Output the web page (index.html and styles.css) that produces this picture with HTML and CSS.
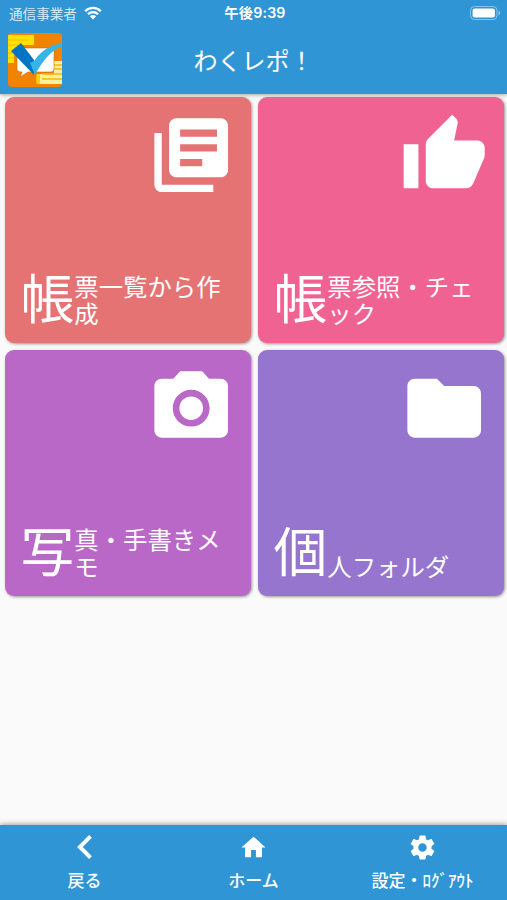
FILE: index.html
```
<!DOCTYPE html>
<html lang="ja">
<head>
    <meta charset="UTF-8">
    <meta name="viewport" content="width=device-width, initial-scale=1.0">
    <title>わくレポ！</title>
    <link rel="stylesheet" href="styles.css">
</head>
<body>

    <!-- Status bar and title -->
    <header class="header">
        <div class="status-bar">
            <div class="carrier">
                <span>通信事業者</span>
                <svg class="wifi" viewBox="0 0 18 14">
                    <path d="M1.2 5.2a11 11 0 0 1 15.6 0M4 8.2a7 7 0 0 1 10 0" fill="none" stroke="#fff" stroke-width="2.3"/>
                    <path d="M9 13.4L5.9 10.3a4.4 4.4 0 0 1 6.2 0z" fill="#fff"/>
                </svg>
            </div>
            <div class="clock">午後9:39</div>
            <svg class="battery" viewBox="0 0 31 14">
                <rect x=".5" y=".5" width="26.5" height="13" rx="4" fill="none" stroke="#8cc3e8"/>
                <rect x="2.6" y="2.6" width="22.3" height="8.8" rx="2" fill="#fff"/>
                <path d="M28.5 4.7v4.6c1-.3 1.7-1.2 1.7-2.3s-.7-2-1.7-2.3z" fill="#8cc3e8"/>
            </svg>
        </div>
        <div class="title-bar">
            <svg class="logo" viewBox="0 0 54 54">
                <defs><clipPath id="logo-clip"><rect width="54" height="54" rx="4"/></clipPath></defs>
                <g clip-path="url(#logo-clip)">
                    <rect width="54" height="54" fill="#f08300"/>
                    <path d="M0 2h26v10H14v5H6v13H0z" fill="#ffe100"/>
                    <path d="M0 7h20M0 12h10M0 20h6M0 25h6" stroke="#f5b000" stroke-width=".8"/>
                    <path d="M46 28h8v23H32V41h14z" fill="#fff0a0"/>
                    <path d="M32 41h-3q-2 5 0 10h3z" fill="#ffd200"/>
                    <path d="M46 32h8M46 36h8M34 41h20M34 46h20" stroke="#f5b800" stroke-width="1.3"/>
                    <path d="M12 15h31q3 0 3 3v18q0 3-3 3H20l-8 5 2-5q-5 0-5-3V18q0-3 3-3z" fill="#fff" stroke="#c96d00" stroke-width=".6"/>
                    <path d="M3 18l10-8 13 17v15z" fill="#0075c2"/>
                    <path d="M22 30l4-2q10-15 28-18v3Q39 19 27 42z" fill="#36b4e5"/>
                </g>
            </svg>
            <h1>わくレポ！</h1>
        </div>
    </header>

    <!-- Menu tiles -->
    <main class="menu">
        <a class="card red">
            <svg class="card-icon" viewBox="0 0 24 24">
                <path d="M4 6H2v14c0 1.100.9 2 2 2h14v-2H4V6zm16-4H8c-1.100 0-2 .9-2 2v12c0 1.100.9 2 2 2h12c1.100 0 2-.9 2-2V4c0-1.100-.9-2-2-2zm-1 9H9V9h10v2zm-4 4H9v-2h6v2zm4-8H9V5h10v2z"/>
            </svg>
            <div class="card-text"><span class="first">帳</span><span class="rest">票一覧から作<br>成</span></div>
        </a>
        <a class="card pink">
            <svg class="card-icon" viewBox="0 0 24 24">
                <path d="M1 21h4V9H1v12zm22-11c0-1.100-.9-2-2-2h-6.310l.95-4.570.03-.32c0-.41-.17-.79-.44-1.060L14.170 1 7.590 7.590C7.220 7.950 7 8.450 7 9v10c0 1.100.9 2 2 2h9c.83 0 1.540-.5 1.840-1.220l3.020-7.050c.09-.23.14-.47.14-.73v-2z"/>
            </svg>
            <div class="card-text"><span class="first">帳</span><span class="rest">票参照・チェ<br>ック</span></div>
        </a>
        <a class="card purple">
            <svg class="card-icon" viewBox="0 0 24 24">
                <circle cx="12" cy="12" r="3.2"/>
                <path d="M9 2L7.170 4H4c-1.100 0-2 .9-2 2v12c0 1.100.9 2 2 2h16c1.100 0 2-.9 2-2V6c0-1.100-.9-2-2-2h-3.170L15 2H9zm3 15c-2.760 0-5-2.240-5-5s2.240-5 5-5 5 2.240 5 5-2.240 5-5 5z"/>
            </svg>
            <div class="card-text"><span class="first">写</span><span class="rest">真・手書きメ<br>モ</span></div>
        </a>
        <a class="card violet">
            <svg class="card-icon" viewBox="0 0 24 24">
                <path d="M10 4H4c-1.100 0-2 .9-2 2v12c0 1.100.9 2 2 2h16c1.100 0 2-.9 2-2V8c0-1.100-.9-2-2-2h-8l-2-2z"/>
            </svg>
            <div class="card-text"><span class="first">個</span><span class="rest">人フォルダ</span></div>
        </a>
    </main>

    <!-- Bottom navigation -->
    <nav class="nav-bar">
        <a class="nav-item">
            <svg class="back" viewBox="8 6 7.41 12"><path d="M15.410 7.410L14 6l-6 6 6 6 1.410-1.410L10.830 12z"/></svg>
            <span>戻る</span>
        </a>
        <a class="nav-item">
            <svg viewBox="0 0 24 24"><path d="M10 20v-6h4v6h5v-8h3L12 3 2 12h3v8z"/></svg>
            <span>ホーム</span>
        </a>
        <a class="nav-item">
            <svg viewBox="0 0 24 24"><path d="M19.430 12.980c.04-.32.07-.64.07-.98s-.03-.66-.07-.98l2.110-1.650c.19-.15.24-.42.12-.64l-2-3.460c-.12-.22-.39-.3-.61-.22l-2.490 1c-.52-.4-1.080-.73-1.690-.98l-.38-2.650C14.460 2.180 14.250 2 14 2h-4c-.25 0-.46.18-.49.42l-.38 2.650c-.61.25-1.170.59-1.690.98l-2.490-1c-.23-.09-.49 0-.61.22l-2 3.460c-.13.22-.07.49.12.64l2.110 1.650c-.04.32-.07.65-.07.98s.03.66.07.98l-2.110 1.650c-.19.15-.24.42-.12.64l2 3.460c.12.22.39.3.61.22l2.490-1c.52.4 1.080.73 1.690.98l.38 2.650c.03.24.24.42.49.42h4c.25 0 .46-.18.49-.42l.38-2.650c.61-.25 1.170-.59 1.690-.98l2.490 1c.23.09.49 0 .61-.22l2-3.460c.12-.22.07-.49-.12-.64l-2.110-1.650zM12 15.500c-1.930 0-3.500-1.570-3.500-3.500s1.570-3.500 3.500-3.500 3.500 1.570 3.500 3.500-1.570 3.500-3.500 3.500z"/></svg>
            <span>設定・ﾛｸﾞｱｳﾄ</span>
        </a>
    </nav>

</body>
</html>
```
FILE: styles.css
```
* {
    box-sizing: border-box;
}
body {
    display: flex;
    flex-direction: column;
    height: 100vh;
    margin: 0;
    background-color: #fafafa;
    color: #fff;
    font-family: "Noto Sans CJK JP", sans-serif;
    overflow: hidden;
}
svg {
    display: block;
    fill: #fff;
}
/* Header styles */
.header {
    height: 94px;
    background-color: #3095d4;
    box-shadow: 0 1px 4px rgba(0, 0, 0, 0.35);
}
.status-bar {
    display: grid;
    grid-template-columns: 1fr auto 1fr;
    align-items: center;
    height: 26px;
    padding: 0 6px 0 9px;
}
.carrier {
    display: flex;
    align-items: center;
    gap: 7px;
    color: #d3e9f7;
    font-size: 13.6px;
    line-height: 20px;
}
.wifi {
    width: 18px;
    height: 14px;
}
.clock {
    font-family: Inter, "Noto Sans CJK JP", sans-serif;
    font-size: 14.2px;
    font-weight: 600;
    line-height: 20px;
    letter-spacing: 0.2px;
}
.battery {
    width: 31px;
    height: 14px;
    justify-self: end;
}
.title-bar {
    display: grid;
    grid-template-columns: 54px 1fr 54px;
    align-items: center;
    height: 68px;
    padding: 0 8px;
}
.logo {
    width: 54px;
    height: 54px;
}
.title-bar h1 {
    margin: 0;
    font-size: 24px;
    font-weight: 400;
    line-height: 34px;
    text-align: center;
}
/* Menu styles */
.menu {
    display: grid;
    grid-template-columns: 1fr 1fr;
    grid-auto-rows: 246px;
    gap: 7px;
    flex: 1;
    padding: 3.4px 3.5px 0 4.5px;
}
.card {
    display: flex;
    flex-direction: column;
    justify-content: space-between;
    padding: 14px 15px 17px 16px;
    border-radius: 9px;
    box-shadow: 1px 1px 3px rgba(0, 0, 0, 0.4);
}
.red {
    background-color: #e57373;
}
.pink {
    background-color: #f06292;
}
.purple {
    background-color: #ba68c8;
}
.violet {
    background-color: #9575cd;
}
.card-icon {
    align-self: flex-end;
    width: 88.4px;
    height: 88.4px;
}
.card-text {
    display: flex;
    align-items: flex-end;
    white-space: nowrap;
}
.first {
    font-size: 53.8px;
    line-height: 60px;
}
.rest {
    font-size: 24.4px;
    line-height: 27px;
}
/* Bottom navigation styles */
.nav-bar {
    display: grid;
    grid-template-columns: repeat(3, 1fr);
    height: 75px;
    background-color: #3095d4;
    box-shadow: 0 -1px 5px rgba(0, 0, 0, 0.35);
}
.nav-item {
    display: flex;
    flex-direction: column;
    align-items: center;
    gap: 6px;
    padding-top: 8px;
    font-size: 17px;
    font-weight: 500;
    line-height: 24px;
}
.nav-item svg {
    width: 29px;
    height: 29px;
}
.nav-item .back {
    height: 24px;
    margin: 2px 0 3px;
}
```
